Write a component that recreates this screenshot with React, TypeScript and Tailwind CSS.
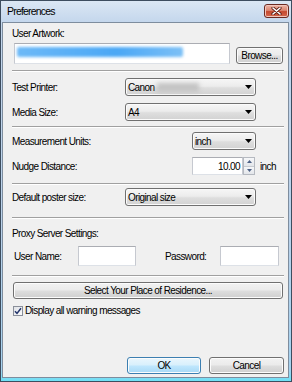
import React from "react";

function Arrow() {
  return (
    <svg width="7" height="4" viewBox="0 0 7 4" className="shrink-0">
      <polygon points="0,0 7,0 3.5,4" fill="#000" />
    </svg>
  );
}

function Combo({ className, children }: { className: string; children: React.ReactNode }) {
  return (
    <div
      className={
        "flex h-[18px] shrink-0 items-center justify-between rounded-[3px] border border-[#707070] bg-[linear-gradient(#f6f6f6_0%,#ececec_45%,#dedede_55%,#d2d2d2_100%)] pl-[2px] pr-[3px] shadow-[inset_0_0_0_1px_#fbfbfb] " +
        className
      }
    >
      <div className="flex items-center">{children}</div>
      <Arrow />
    </div>
  );
}

function Sep() {
  return <div className="h-[2px] border-t border-b border-t-[#a0a0a0] border-b-white" />;
}

function Btn({ className, def, children }: { className: string; def?: boolean; children: React.ReactNode }) {
  return (
    <div
      className={
        (def
          ? "border-[#3c7fb1] bg-[linear-gradient(#eaf6fd_0%,#d9f0fc_45%,#bee6fd_55%,#a7d9f5_100%)] "
          : "border-[#707070] bg-[linear-gradient(#f2f2f2_0%,#ebebeb_45%,#dddddd_55%,#cfcfcf_100%)] ") +
        "flex shrink-0 items-center justify-center rounded-[3px] border shadow-[inset_0_0_0_1px_#fcfcfc] " +
        className
      }
    >
      {children}
    </div>
  );
}

function Field({ className, children }: { className: string; children?: React.ReactNode }) {
  return (
    <div
      className={
        "flex shrink-0 items-center border border-[#abadb3] border-b-[#dde1e7] border-l-[#c6c9d0] border-r-[#c6c9d0] bg-white " +
        className
      }
    >
      {children}
    </div>
  );
}

export default function App() {
  return (
    <div className="flex h-[382px] w-[292px] flex-col border border-[#3d4d5f] bg-[linear-gradient(#dbe7f4_0px,#c3d6ec_22px,#b9d1ea_60%,#a6d2ef_97%,#6ee1f6_100%)] font-['Liberation_Sans',Arial,sans-serif] text-[10px] leading-[13px] tracking-[-0.6px] text-black">
      {/* Title bar */}
      <div className="flex h-[21px] shrink-0 items-start justify-between pl-[6px] pr-[2px]">
        <span className="mt-[4px] text-[10.5px] leading-[13px] tracking-[-0.8px]">Preferences</span>
        <div className="mt-[3px] flex h-[14px] w-[25px] items-center justify-center rounded-[3px] border border-[#6b2a22] bg-[linear-gradient(#eeb4a6_0%,#db8671_45%,#c5492f_55%,#d5694f_100%)] shadow-[inset_0_0_0_1px_#f2c6bb]">
          <svg width="11" height="8" viewBox="0 0 11 8">
            <path d="M2 1 L9 7 M9 1 L2 7" stroke="#5a1c14" strokeWidth="3.2" strokeLinecap="round" />
            <path d="M2 1 L9 7 M9 1 L2 7" stroke="#ffffff" strokeWidth="1.6" strokeLinecap="round" />
          </svg>
        </div>
      </div>

      {/* Client */}
      <div className="mb-[3px] ml-[1px] mr-[2px] flex flex-1 flex-col border border-[#7e8d9e] bg-[#f0f0f0] pb-[3px] pl-[9px] pr-[4px] pt-[4px]">
        <div className="h-[13px]">User Artwork:</div>
        <div className="mt-[3px] flex items-end">
          <Field className="ml-[2px] h-[21px] w-[216px] items-start pl-[2px] pt-[3px]">
            <div className="h-[10px] w-[166px] rounded-[2px] bg-[linear-gradient(90deg,#6cb9f7,#4aa7f5_60%,#7cc0f6)] blur-[1.5px]" />
          </Field>
          <Btn className="ml-[6px] h-[17px] w-[47px]">Browse...</Btn>
        </div>

        <div className="mt-[6px]">
          <Sep />
        </div>

        <div className="mt-[6px] flex items-center">
          <div className="w-[113px] shrink-0">Test Printer:</div>
          <Combo className="w-[131px]">
            <span>Canon</span>
            <span className="ml-[3px] h-[9px] w-[42px] bg-[#c4c4c4] blur-[2px]" />
          </Combo>
        </div>
        <div className="mt-[7px] flex items-center">
          <div className="w-[113px] shrink-0">Media Size:</div>
          <Combo className="w-[131px]">
            <span>A4</span>
          </Combo>
        </div>

        <div className="mt-[5px]">
          <Sep />
        </div>

        <div className="mt-[4px] flex items-center">
          <div className="w-[180px] shrink-0">Measurement Units:</div>
          <Combo className="w-[64px]">
            <span>inch</span>
          </Combo>
        </div>
        <div className="mt-[7px] flex items-center">
          <div className="w-[180px] shrink-0">Nudge Distance:</div>
          <Field className="h-[18px] w-[51px] justify-end pr-[2px]">10.00</Field>
          <div className="flex h-[18px] w-[12px] shrink-0 flex-col border border-[#b5b9c0] bg-[#eef0f3]">
            <div className="flex flex-1 items-center justify-center border-b border-[#c6cad0] bg-[linear-gradient(#f6f7f9,#e3e6ea)]">
              <svg width="5" height="3" viewBox="0 0 5 3">
                <polygon points="0,3 5,3 2.5,0" fill="#4d6185" />
              </svg>
            </div>
            <div className="flex flex-1 items-center justify-center bg-[linear-gradient(#f6f7f9,#e3e6ea)]">
              <svg width="5" height="3" viewBox="0 0 5 3">
                <polygon points="0,0 5,0 2.5,3" fill="#4d6185" />
              </svg>
            </div>
          </div>
          <span className="ml-[5px]">inch</span>
        </div>

        <div className="mt-[8px]">
          <Sep />
        </div>

        <div className="mt-[3px] flex items-center">
          <div className="w-[113px] shrink-0">Default poster size:</div>
          <Combo className="w-[131px]">
            <span>Original size</span>
          </Combo>
        </div>

        <div className="mt-[11px]">
          <Sep />
        </div>

        <div className="mt-[8px] h-[13px]">Proxy Server Settings:</div>
        <div className="mt-[6px] flex items-center">
          <div className="ml-[2px] w-[64px] shrink-0">User Name:</div>
          <Field className="h-[20px] w-[58px]" />
          <div className="ml-[29px] w-[55px] shrink-0">Password:</div>
          <Field className="h-[20px] w-[59px]" />
        </div>

        <div className="mt-[9px]">
          <Sep />
        </div>

        <Btn className="ml-[1px] mt-[5px] h-[17px] w-[270px]">Select Your Place of Residence...</Btn>

        <div className="mt-[5px] flex h-[13px] items-center">
          <div className="ml-[1px] flex h-[10px] w-[10px] shrink-0 items-center justify-center border border-[#8a8f9a] bg-[linear-gradient(135deg,#dfe2e7,#fbfbfc)]">
            <svg width="8" height="8" viewBox="0 0 8 8">
              <path d="M1 4.2 L3 6.4 L7 1.2" stroke="#23346b" strokeWidth="1.5" fill="none" />
            </svg>
          </div>
          <span className="ml-[2px]">Display all warning messages</span>
        </div>

        <div className="flex-1" />

        <div className="flex justify-end">
          <Btn def className="h-[17px] w-[74px]">OK</Btn>
          <Btn className="ml-[8px] h-[17px] w-[75px]">Cancel</Btn>
        </div>
      </div>
    </div>
  );
}
